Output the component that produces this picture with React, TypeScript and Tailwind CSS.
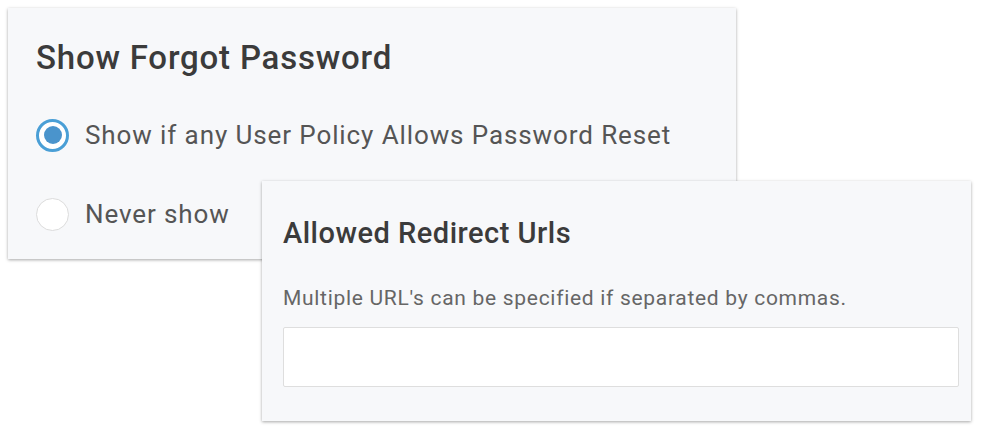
import React, { useState } from 'react';

const Radio: React.FC<{ checked: boolean; onClick: () => void }> = ({ checked, onClick }) => (
  <button
    type="button"
    onClick={onClick}
    className={`flex h-[33px] w-[33px] shrink-0 items-center justify-center rounded-full bg-white ${
      checked ? 'border-[3px] border-[#4a9fd6]' : 'border-[1.5px] border-[#dcdcdc]'
    }`}
  >
    {checked && <span className="h-[18px] w-[18px] rounded-full bg-[#4a94cc]" />}
  </button>
);

export default function App() {
  const [mode, setMode] = useState<'any' | 'never'>('any');
  const [urls, setUrls] = useState('');

  return (
    <div className="relative h-[434px] w-full overflow-hidden bg-white font-['Roboto',sans-serif]">
      <div className="ml-[8px] mt-[8px] h-[251px] w-[728px] bg-[#f7f8fa] pl-[28px] pt-[30px] shadow-[0_1px_3px_rgba(0,0,0,0.35)]">
        <h2 className="text-[33px] font-medium leading-[40px] tracking-[0.8px] text-[#3b3b3b]">Show Forgot Password</h2>
        <div className="mt-[40px] flex flex-col gap-[45px]">
          <label className="flex h-[34px] items-center gap-[16px] text-[26px] leading-[34px] tracking-[0.9px] text-[#555555]">
            <Radio checked={mode === 'any'} onClick={() => setMode('any')} />
            <span>Show if any User Policy Allows Password Reset</span>
          </label>
          <label className="flex h-[34px] items-center gap-[16px] text-[26px] leading-[34px] tracking-[0.9px] text-[#555555]">
            <Radio checked={mode === 'never'} onClick={() => setMode('never')} />
            <span>Never show</span>
          </label>
        </div>
      </div>

      <div className="absolute left-[262px] top-[181px] h-[240px] w-[709px] bg-[#f7f8fa] px-[21px] pt-[35px] shadow-[0_1px_3px_rgba(0,0,0,0.35)]">
        <h3 className="text-[29px] font-medium leading-[34px] tracking-[0.5px] text-[#3b3b3b]">Allowed Redirect Urls</h3>
        <p className="mt-[35px] text-[21px] leading-[26px] tracking-[0.7px] text-[#666666]">
          Multiple URL's can be specified if separated by commas.
        </p>
        <input
          value={urls}
          onChange={(e) => setUrls(e.target.value)}
          className="mt-[16px] h-[60px] w-[676px] rounded-[2px] border border-[#dedede] bg-white px-3 text-[18px] text-[#444] outline-none"
        />
      </div>
    </div>
  );
}
